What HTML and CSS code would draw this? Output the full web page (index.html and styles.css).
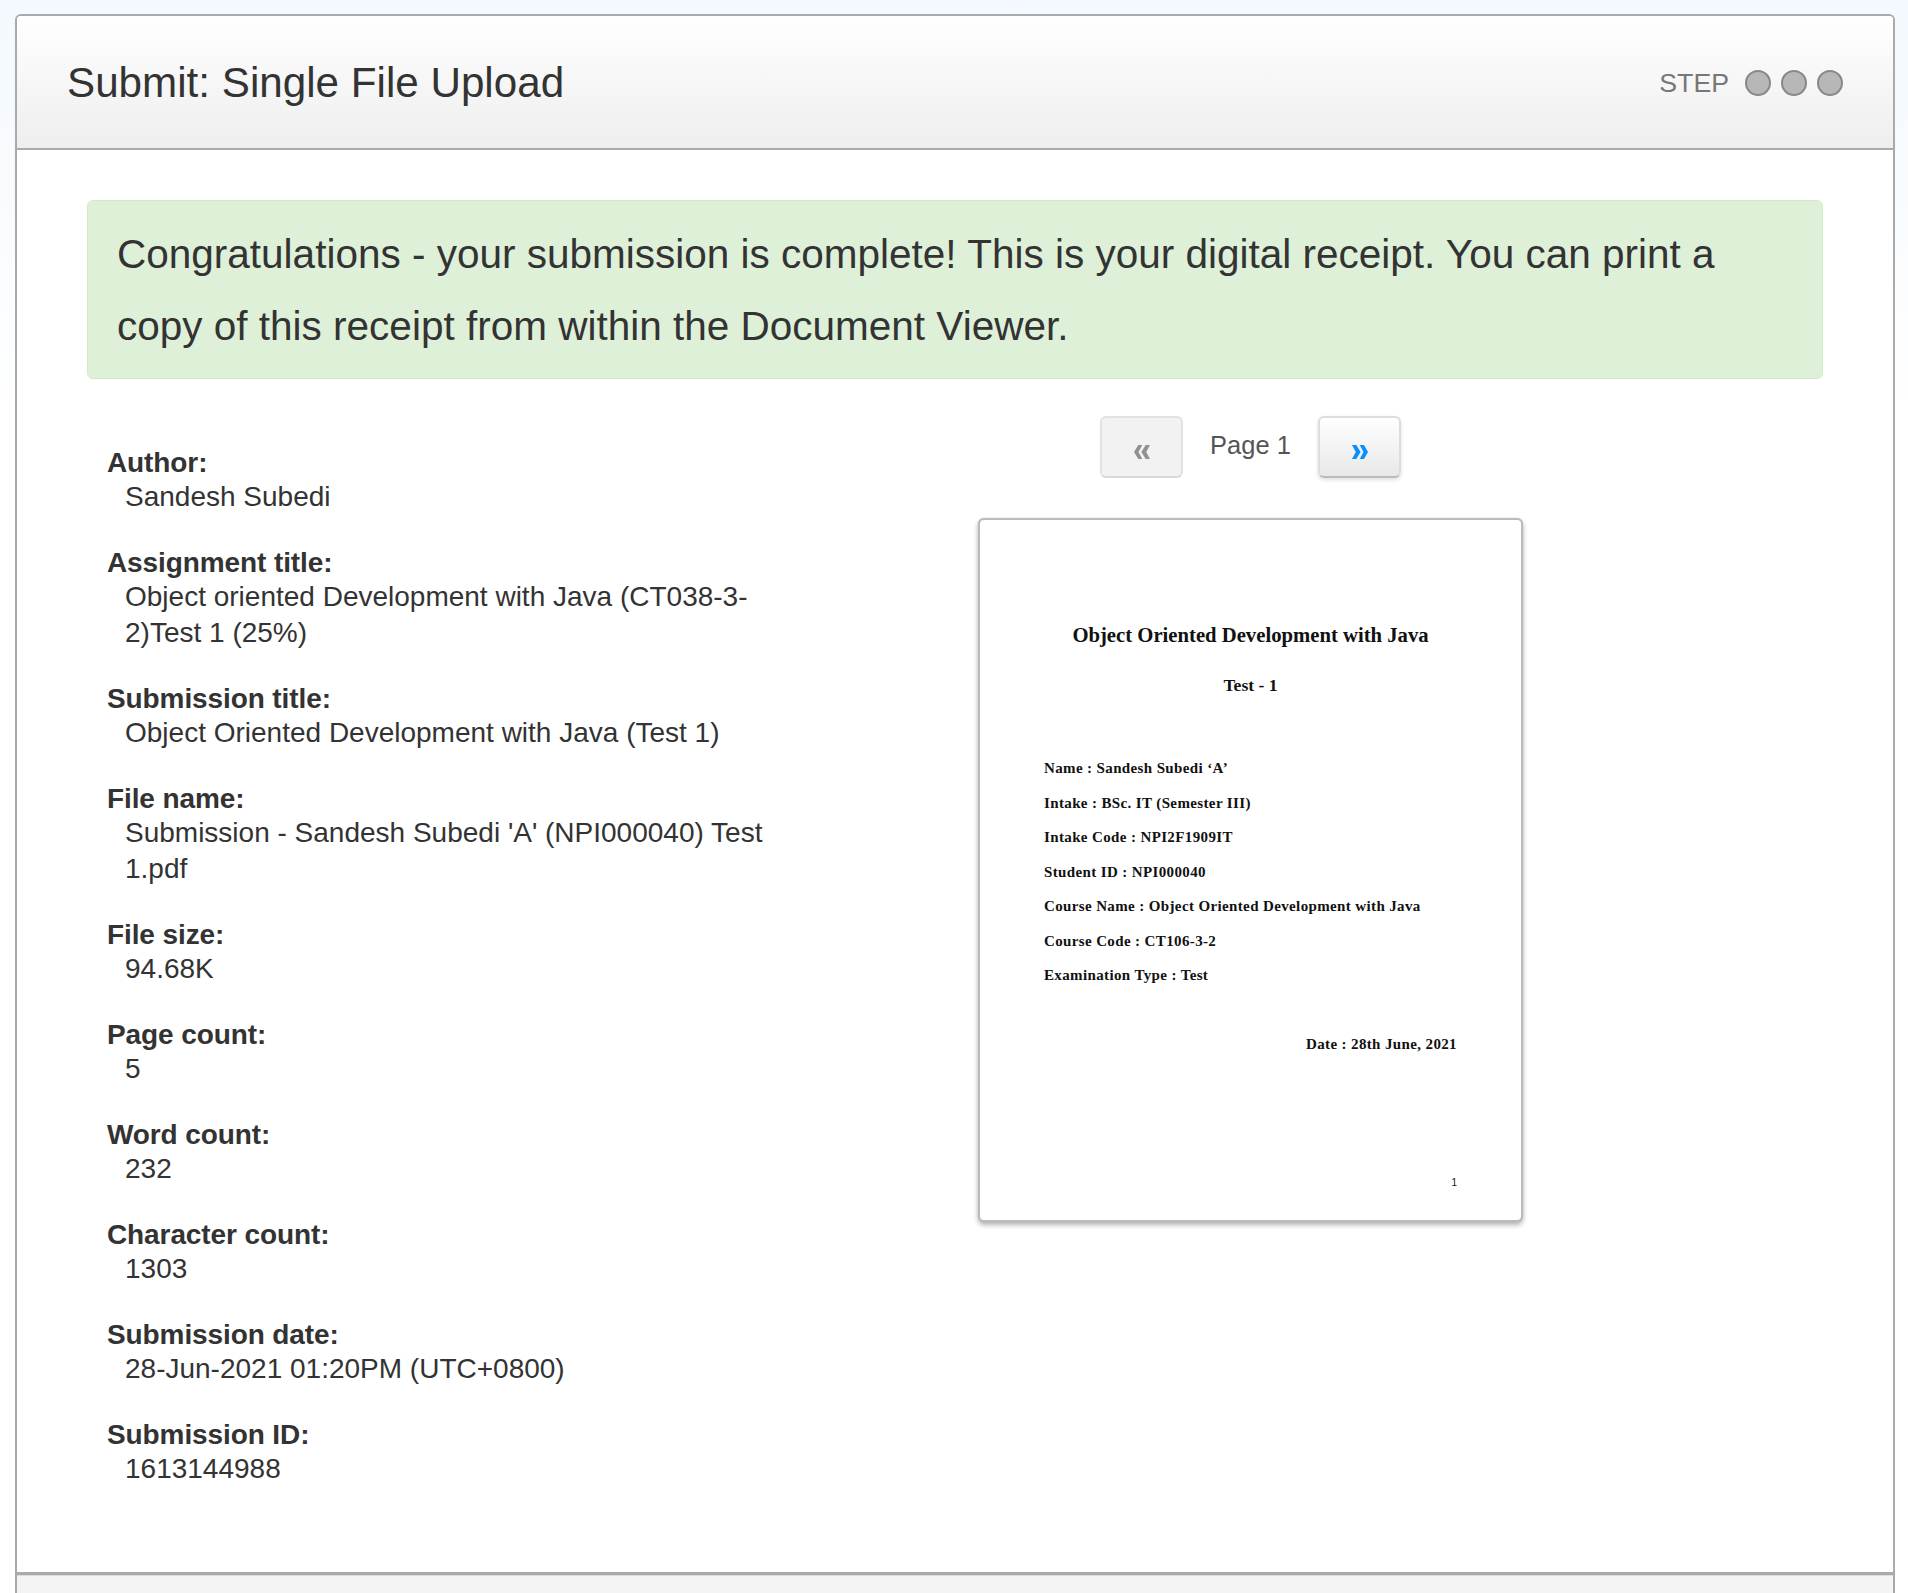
FILE: index.html
```html
<!DOCTYPE html>
<html lang="en">
<head>
<meta charset="utf-8">
<title>Submit: Single File Upload</title>
<link rel="stylesheet" href="styles.css">
</head>
<body>
<div class="window">
  <header class="head">
    <h1 class="title">Submit: Single File Upload</h1>
    <div class="steps">
      <span class="step-label">STEP</span>
      <span class="dot"></span><span class="dot"></span><span class="dot"></span>
    </div>
  </header>
  <main class="main">
    <div class="alert">Congratulations - your submission is complete! This is your digital receipt. You can print a copy of this receipt from within the Document Viewer.</div>
    <div class="columns">
      <dl class="meta">
        <div class="item"><dt>Author:</dt><dd>Sandesh Subedi</dd></div>
        <div class="item"><dt>Assignment title:</dt><dd>Object oriented Development with Java (CT038-3-2)Test 1 (25%)</dd></div>
        <div class="item"><dt>Submission title:</dt><dd>Object Oriented Development with Java (Test 1)</dd></div>
        <div class="item"><dt>File name:</dt><dd>Submission - Sandesh Subedi 'A' (NPI000040) Test 1.pdf</dd></div>
        <div class="item"><dt>File size:</dt><dd>94.68K</dd></div>
        <div class="item"><dt>Page count:</dt><dd>5</dd></div>
        <div class="item"><dt>Word count:</dt><dd>232</dd></div>
        <div class="item"><dt>Character count:</dt><dd>1303</dd></div>
        <div class="item"><dt>Submission date:</dt><dd>28-Jun-2021 01:20PM (UTC+0800)</dd></div>
        <div class="item"><dt>Submission ID:</dt><dd>1613144988</dd></div>
      </dl>
      <section class="viewer">
        <div class="pager">
          <button class="pbtn pbtn-off" type="button" aria-label="Previous page">
            <svg class="chev" viewBox="0 0 16 14"><path d="M4.300 0 0 7l4.300 7h4L4.500 7l3.800-7zM11.700 0 7.400 7l4.300 7H16l-3.800-7L16 0z"/></svg>
          </button>
          <span class="page-no">Page 1</span>
          <button class="pbtn pbtn-on" type="button" aria-label="Next page">
            <svg class="chev" viewBox="0 0 16 14"><path d="M0 0l3.800 7L0 14h4.300L8.600 7 4.300 0zM7.700 0l3.800 7-3.800 7H12l4-7-4-7z"/></svg>
          </button>
        </div>
        <article class="sheet">
          <p class="doc-title">Object Oriented Development with Java</p>
          <p class="doc-sub">Test - 1</p>
          <div class="doc-rows">
            <p>Name : Sandesh Subedi ‘A’</p>
            <p>Intake : BSc. IT (Semester III)</p>
            <p>Intake Code : NPI2F1909IT</p>
            <p>Student ID : NPI000040</p>
            <p>Course Name : Object Oriented Development with Java</p>
            <p>Course Code : CT106-3-2</p>
            <p>Examination Type : Test</p>
          </div>
          <p class="doc-date">Date : 28th June, 2021</p>
          <p class="doc-num">1</p>
        </article>
      </section>
    </div>
  </main>
  <footer class="foot"></footer>
</div>
</body>
</html>
```
FILE: styles.css
```css
* { box-sizing: border-box; }
html, body { margin: 0; padding: 0; }
body {
  height: 1593px;
  overflow: hidden;
  padding-top: 14px;
  background: linear-gradient(180deg, #f3f9fe 0, #ffffff 420px);
  font-family: "Liberation Sans", Arial, sans-serif;
  color: #333;
}
.window {
  margin-left: 15px;
  width: 1880px;
  height: 1579px;
  background: #fff;
  border: 2px solid #aaa;
  border-bottom: 0;
  border-radius: 6px 6px 0 0;
  display: flex;
  flex-direction: column;
}
.head {
  height: 134px;
  flex: none;
  padding: 2px 50px 0 50px;
  display: flex;
  align-items: center;
  justify-content: space-between;
  background: linear-gradient(180deg, #ffffff 0, #eeeeee 100%);
  border-bottom: 2px solid #aaa;
  border-radius: 4px 4px 0 0;
}
.title {
  margin: 0;
  font-size: 42.2px;
  font-weight: 400;
  line-height: 50px;
  color: #333;
}
.steps { display: flex; align-items: center; }
.step-label { font-size: 26.7px; color: #777; margin-right: 16px; }
.dot {
  width: 26px;
  height: 26px;
  border-radius: 50%;
  background: #b7b7b7;
  border: 2px solid #888;
  margin-right: 10px;
}
.dot:last-child { margin-right: 0; }
.main { flex: 1; padding: 50px 70px 0 70px; }
.alert {
  height: 179px;
  padding: 17px 29px;
  background: #dff0d8;
  border: 1px solid #d6e9c6;
  border-radius: 6px;
  font-size: 40.5px;
  line-height: 72px;
  color: #333;
}
.columns { display: flex; align-items: flex-start; }
.meta {
  width: 703px;
  margin: 68px 188px 0 0;
  padding-left: 20px;
  font-size: 28px;
}
.item { margin-bottom: 32px; }
.item dt { font-weight: 700; line-height: 32px; letter-spacing: -0.1px; }
.item dd { margin: 0 0 0 18px; line-height: 36px; }
.viewer { width: 545px; margin-top: 37px; display: flex; flex-direction: column; align-items: center; }
.pager { display: flex; align-items: flex-start; height: 62px; }
.pbtn {
  width: 83px;
  height: 62px;
  padding: 10px 0 0;
  border-radius: 6px;
  display: flex;
  align-items: center;
  justify-content: center;
}
.pbtn-off { background: #f2f2f2; border: 2px solid #e2e2e2; border-bottom-color: #d8d8d8; fill: #919191; }
.pbtn-on {
  background: linear-gradient(180deg, #ffffff 0, #e8e8e8 100%);
  border: 2px solid #ddd;
  border-bottom-color: #bbb;
  box-shadow: 0 2px 4px rgba(0,0,0,.12);
  fill: #0a8fff;
}
.chev { width: 16px; height: 14px; display: block; }
.page-no { width: 135px; text-align: center; font-size: 25.5px; line-height: 34px; padding-top: 12px; color: #555; }
.sheet {
  width: 545px;
  height: 704px;
  margin-top: 40px;
  padding: 102px 64px 0;
  background: #fff;
  border: 2px solid #bbb;
  border-radius: 6px;
  box-shadow: 0 0 1px #bbb, 0 3px 5px rgba(0,0,0,.3);
  font-family: "Liberation Serif", "Times New Roman", serif;
  font-weight: 700;
  color: #111;
}
.sheet p { margin: 0; }
.doc-title { font-size: 20.7px; line-height: 26px; text-align: center; }
.doc-sub { margin-top: 25px !important; font-size: 17.6px; line-height: 24px; text-align: center; }
.doc-rows { margin-top: 54px; font-size: 15px; line-height: 34.5px; letter-spacing: 0.37px; }
.doc-date { margin-top: 34px !important; font-size: 15px; line-height: 34.5px; letter-spacing: 0.37px; text-align: right; }
.doc-num { margin-top: 117px !important; font-family: "Liberation Sans", Arial, sans-serif; font-size: 10px; font-weight: 400; line-height: 10px; text-align: right; }
.foot {
  flex: none;
  height: 21px;
  margin-top: auto;
  background: #f4f4f4;
  border-top: 3px solid #aaa;
  box-shadow: inset 0 1px 0 #ddd;
}
```
